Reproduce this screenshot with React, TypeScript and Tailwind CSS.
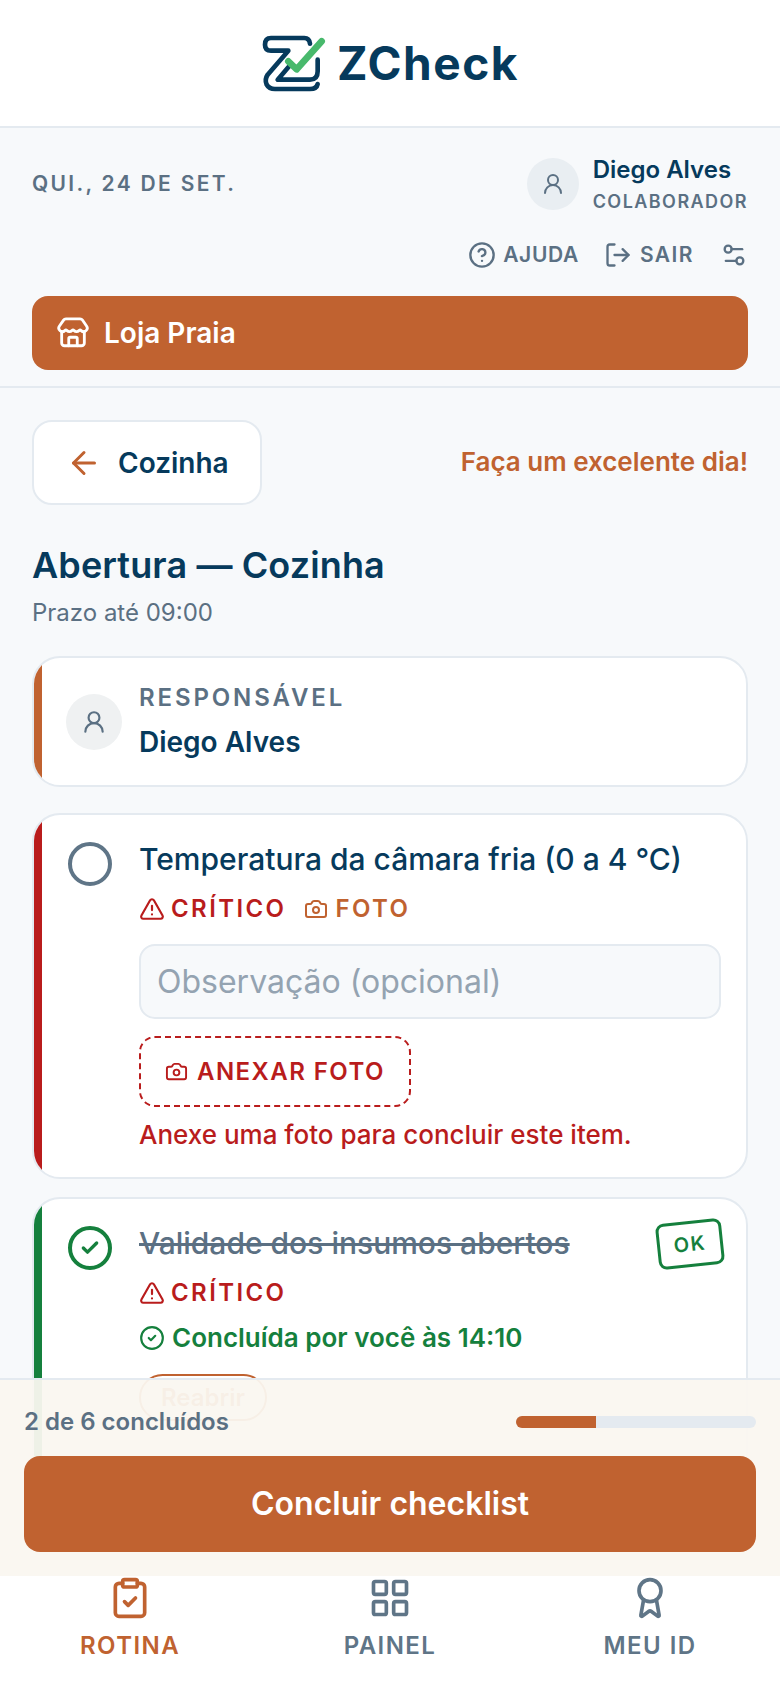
import React from "react";
import {
  ArrowLeft,
  Award,
  Camera,
  Check,
  CircleCheck,
  CircleHelp,
  ClipboardCheck,
  LayoutGrid,
  LogOut,
  Settings2,
  Store,
  TriangleAlert,
  UserRound,
} from "lucide-react";

function Logo() {
  return (
    <svg width="95" height="70" viewBox="0 0 285 210" fill="none" strokeLinecap="round" strokeLinejoin="round">
      <path
        d="M165 47 Q163 30 148 30 H48 Q30 30 30 50 Q30 68 48 68 H100 L38 140 Q28 155 35 170 Q42 183 60 183 H165 Q185 183 188 168"
        stroke="#063a5c"
        strokeWidth="14"
      />
      <path d="M105 112 L68 155 H165 Q188 155 188 130 V95" stroke="#063a5c" strokeWidth="14" />
      <path d="M100 100 L125 124 L200 40" stroke="#48b96c" strokeWidth="20" />
    </svg>
  );
}

function Critical() {
  return (
    <div className="flex items-center gap-[6px] text-[#b91c1c]">
      <TriangleAlert size={26} strokeWidth={2} />
      <span className="text-[24px] leading-[30px] font-semibold tracking-[0.1em]">CRÍTICO</span>
    </div>
  );
}

export default function App() {
  return (
    <div className="relative flex h-[1688px] w-[780px] flex-col overflow-hidden bg-[#f7f9fb] [font-family:Inter,sans-serif] text-[#063a5c]">
      <header className="flex h-[128px] shrink-0 items-center justify-center border-b-2 border-[#e4eaf0] bg-white pr-[6px]">
        <Logo />
        <span className="-ml-[13px] text-[46px] leading-none font-bold tracking-[0.033em] text-[#063a5c]">ZCheck</span>
      </header>

      <section className="shrink-0 border-b-2 border-[#e4eaf0] px-8 pt-[27px] pb-4">
        <div className="flex items-center justify-between">
          <span className="text-[21px] font-semibold tracking-[0.11em] text-[#5b7083]">QUI., 24 DE SET.</span>
          <div className="flex items-center gap-[14px]">
            <div className="flex h-[52px] w-[52px] items-center justify-center rounded-full bg-[#e9eef2] text-[#5b7083]">
              <UserRound size={24} strokeWidth={2} />
            </div>
            <div className="flex flex-col">
              <span className="text-[24px] leading-[30px] font-semibold">Diego Alves</span>
              <span className="mt-[6px] text-[18px] leading-[22px] font-semibold tracking-[0.08em] text-[#5b7083]">COLABORADOR</span>
            </div>
          </div>
        </div>
        <div className="mt-[28px] flex h-[28px] items-center justify-end text-[#5b7083]">
          <CircleHelp size={28} strokeWidth={2} />
          <span className="ml-[7px] text-[21px] font-semibold tracking-[0.03em]">AJUDA</span>
          <LogOut size={28} strokeWidth={2} className="ml-[25px]" />
          <span className="ml-[8px] text-[21px] font-semibold tracking-[0.07em]">SAIR</span>
          <Settings2 size={28} strokeWidth={2} className="ml-[26px]" />
        </div>
        <div className="mt-[27px] flex h-[74px] items-center gap-[14px] rounded-2xl bg-[#c06230] pl-[24px] text-white">
          <Store size={34} strokeWidth={2} />
          <span className="text-[28px] font-semibold">Loja Praia</span>
        </div>
      </section>

      <main className="min-h-0 flex-1 overflow-hidden px-8 pt-8">
        <div className="flex items-center justify-between">
          <div className="flex h-[85px] w-[230px] items-center gap-[16px] rounded-[20px] border-2 border-[#e4eaf0] bg-white pl-[32px]">
            <ArrowLeft size={36} strokeWidth={2} className="text-[#c06230]" />
            <span className="text-[28px] font-semibold">Cozinha</span>
          </div>
          <span className="mb-[2px] text-[26px] font-semibold text-[#c06230]">Faça um excelente dia!</span>
        </div>

        <h1 className="mt-[38px] text-[36px] leading-[44px] font-semibold tracking-[0.12px]">Abertura — Cozinha</h1>
        <p className="mt-[10px] text-[24px] leading-[32px] text-[#5b7083]">Prazo até 09:00</p>

        <div className="mt-[27px] flex h-[131px] overflow-hidden rounded-[28px] border-2 border-[#e4eaf0] bg-white">
          <div className="w-2 shrink-0 bg-[#c06230]" />
          <div className="flex flex-1 items-center gap-[17px] pl-[24px]">
            <div className="flex h-[56px] w-[56px] items-center justify-center rounded-full bg-[#eff1f2] text-[#5b7083]">
              <UserRound size={26} strokeWidth={2} />
            </div>
            <div className="flex flex-col">
              <span className="text-[24px] leading-[30px] font-semibold tracking-[0.12em] text-[#5b7083]">RESPONSÁVEL</span>
              <span className="mt-[11px] text-[28px] leading-[36px] font-semibold">Diego Alves</span>
            </div>
          </div>
        </div>

        <div className="mt-[26px] flex overflow-hidden rounded-[28px] border-2 border-[#e4eaf0] bg-white">
          <div className="w-2 shrink-0 bg-[#b91c1c]" />
          <div className="flex flex-1 items-start gap-[27px] pt-[24px] pr-[25px] pb-[24px] pl-[26px]">
            <div className="mt-[3px] h-[44px] w-[44px] shrink-0 rounded-full border-4 border-[#5f7587]" />
            <div className="flex min-w-0 flex-1 flex-col">
              <span className="text-[30px] leading-[40px] font-medium whitespace-nowrap">Temperatura da câmara fria (0 a 4 °C)</span>
              <div className="mt-[15px] flex items-center gap-[18px]">
                <Critical />
                <div className="flex items-center gap-[7px] text-[#c06230]">
                  <Camera size={24} strokeWidth={2} />
                  <span className="text-[24px] leading-[30px] font-semibold tracking-[0.1em]">FOTO</span>
                </div>
              </div>
              <input
                readOnly
                placeholder="Observação (opcional)"
                className="mt-[20px] h-[75px] w-full rounded-2xl border-2 border-[#e4eaf0] bg-[#f7f9fb] px-4 text-[32px] placeholder:text-[#94a3b1]"
              />
              <div className="mt-[17px] flex h-[71px] w-[272px] items-center gap-[9px] rounded-2xl border-2 border-dashed border-[#b91c1c] pl-[24px] text-[#b91c1c]">
                <Camera size={23} strokeWidth={2} />
                <span className="text-[24px] font-semibold tracking-[0.06em] whitespace-nowrap">ANEXAR FOTO</span>
              </div>
              <p className="mt-[10px] text-[26px] leading-[36px] font-medium text-[#b91c1c]">Anexe uma foto para concluir este item.</p>
            </div>
          </div>
        </div>

        <div className="mt-[18px] flex overflow-hidden rounded-[28px] border-2 border-[#e4eaf0] bg-white">
          <div className="w-2 shrink-0 bg-[#15803d]" />
          <div className="relative flex flex-1 items-start gap-[27px] pt-[24px] pr-[25px] pb-[60px] pl-[26px]">
            <div className="mt-[3px] flex h-[44px] w-[44px] shrink-0 items-center justify-center rounded-full border-4 border-[#15803d] text-[#15803d]">
              <Check size={20} strokeWidth={4} />
            </div>
            <div className="flex min-w-0 flex-1 flex-col">
              <span className="text-[30px] leading-[40px] font-medium text-[#5b7083] line-through">Validade dos insumos abertos</span>
              <div className="mt-[15px]">
                <Critical />
              </div>
              <div className="mt-[14px] flex items-center gap-[7px] text-[#15803d]">
                <CircleCheck size={26} strokeWidth={2} />
                <span className="text-[26px] leading-[32px] font-semibold">Concluída por você às 14:10</span>
              </div>
              <div className="mt-[20px] flex h-[47px] w-[128px] items-center justify-center rounded-full border-2 border-[#c06230] text-[24px] font-semibold text-[#c06230]">
                Reabrir
              </div>
            </div>
            <div className="absolute top-[22px] right-[23px] flex h-[46px] w-[66px] -rotate-6 items-center justify-center rounded-lg border-[3px] border-[#15803d] text-[20px] font-semibold tracking-[0.08em] text-[#15803d]">
              OK
            </div>
          </div>
        </div>
      </main>

      <div className="absolute right-0 bottom-[112px] left-0 border-t-2 border-[#e4eaf0] bg-[#faf7f0]/95 px-6 pt-[26px] pb-6">
        <div className="flex items-center justify-between">
          <span className="text-[24px] leading-[32px] font-semibold text-[#5b7083]">2 de 6 concluídos</span>
          <div className="h-3 w-[240px] overflow-hidden rounded-full bg-[#e4eaf0]">
            <div className="h-full w-1/3 bg-[#c06230]" />
          </div>
        </div>
        <button className="mt-[18px] flex h-[96px] w-full items-center justify-center rounded-2xl bg-[#c06230] text-[32px] font-semibold text-white">
          Concluir checklist
        </button>
      </div>

      <nav className="grid h-[112px] shrink-0 grid-cols-3 bg-white">
        <div className="flex flex-col items-center text-[#c06230]">
          <ClipboardCheck size={44} strokeWidth={2} />
          <span className="mt-[10px] text-[24px] leading-[32px] font-semibold tracking-[0.06em]">ROTINA</span>
        </div>
        <div className="flex flex-col items-center text-[#5f7587]">
          <LayoutGrid size={44} strokeWidth={2} />
          <span className="mt-[10px] text-[24px] leading-[32px] font-semibold tracking-[0.06em]">PAINEL</span>
        </div>
        <div className="flex flex-col items-center text-[#5f7587]">
          <Award size={44} strokeWidth={2} />
          <span className="mt-[10px] text-[24px] leading-[32px] font-semibold tracking-[0.06em]">MEU ID</span>
        </div>
      </nav>
    </div>
  );
}
